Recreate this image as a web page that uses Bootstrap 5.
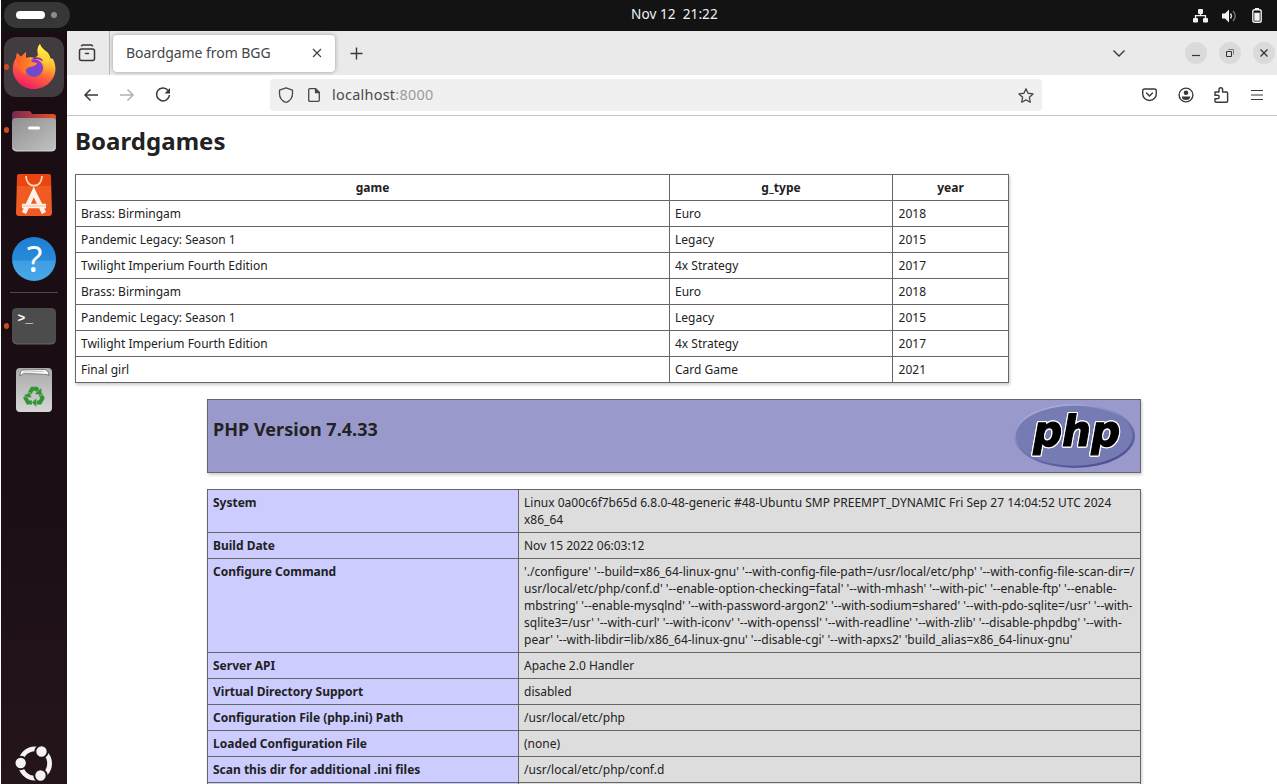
<!DOCTYPE html>
<html lang="en">
<head>
<meta charset="utf-8">
<meta name="viewport" content="width=device-width, initial-scale=1">
<title>Boardgame from BGG</title>
<link href="https://cdn.jsdelivr.net/npm/bootstrap@5.3.0/dist/css/bootstrap.min.css" rel="stylesheet">
<style>
html,body{height:100%}
body{font-family:"Noto Sans",sans-serif;color:#222;background:#fff;overflow:hidden;padding-left:1px}
svg{display:block;flex:none;overflow:visible}
.topbar{height:31px;background:#131313;color:#f2f2f2;font-size:13.6px;display:grid;grid-template-columns:630px auto 1fr;padding:0 15px 0 0;flex:none}
.topbar time{white-space:pre;line-height:28px;letter-spacing:.05px}
.activities{width:66px;height:26px;border-radius:13px;background:#373737;margin:2px 0 0 3px;padding-left:12px;gap:6px}
.activities i{width:29px;height:8px;border-radius:4px;background:#fff}
.activities b{width:6px;height:6px;border-radius:50%;background:#8c8c8c}
.dock{width:66px;background:linear-gradient(#190c13,#1b0e15 60%,#24151b);flex:none;padding-top:6px}
.dock-item{width:60px;height:60px;margin-left:3px;margin-bottom:4px;border-radius:12px;position:relative}
.dock-item.current{background:#423b40}
.dock-item.running::before{content:"";position:absolute;left:0;top:27px;width:5px;height:6px;border-radius:50%;background:#d14b20}
.dock-line{width:48px;height:1px;background:#51474c;margin:-1px 0 3px 9px}
.tabstrip{height:44px;background:#eaeaea;flex:none}
.tabview{width:43px;border-right:1px solid #b8b8b8;padding-left:11px}
.page-tab{width:222px;height:37px;margin-left:3px;background:#fff;border-radius:4px;box-shadow:0 0 4px #999;padding:0 13px 2px 13px;font-size:14px;color:#45454a}
.page-tab span{letter-spacing:-.06px}
.round-btn{width:22px;height:22px;border-radius:50%;background:#dadada}
.toolbar{height:41px;border-bottom:1px solid #c9c9cb;flex:none;padding:0 14px 0 16px}
.addressbar{width:772px;height:32px;background:#f0f0f0;border-radius:4px;margin-left:99px;padding:0 8px 0 8px;font-size:14.4px;color:#4a4a4e}
.addressbar span{letter-spacing:.28px}
.addressbar em{font-style:normal;color:#9b9b9f}
.document{padding:0 8px;min-height:0}
.document h1{font-size:24px;font-weight:700;line-height:33px;margin:8px 0 17px;letter-spacing:.05px}
.document table{width:933px;table-layout:fixed;border-collapse:collapse;box-shadow:1px 2px 3px #ccc;font-size:12px;line-height:17px}
.document td,.document th{border:1px solid #666;padding:4px 5px;vertical-align:baseline;font-weight:400;overflow-wrap:anywhere}
.games th{font-weight:700;text-align:center}
.games td:last-child{padding-left:5.6px}
.phpinfo{width:934px;margin-left:132px}
.php-head{height:74px;background:#99c;border:1px solid #666;box-shadow:1px 2px 3px #ccc;margin:16px 0;padding:0 5px}
.php-head h2{font-size:18px;line-height:25px;font-weight:700;margin:17px 0 0;letter-spacing:.03px}
.php-word{filter:drop-shadow(1px 0 0 #fff) drop-shadow(-1px 0 0 #fff) drop-shadow(0 1px 0 #fff) drop-shadow(0 -1px 0 #fff)}
.phpinfo th{background:#ccf;font-weight:700}
.phpinfo td{background:#ddd;white-space:nowrap}
</style>
<script src="https://cdn.jsdelivr.net/npm/bootstrap@5.3.0/dist/js/bootstrap.bundle.min.js"></script>
</head>
<body class="d-flex flex-column">
<header class="topbar">
  <div class="activities d-flex align-items-center"><i></i><b></b></div>
  <time>Nov 12  21:22</time>
  <div class="d-flex justify-content-end align-items-center gap-3">
    <svg width="15" height="14" viewBox="0 0 15 14" fill="#f2f2f2"><rect x="5" y="0" width="5" height="5" rx="1"/><rect x="0" y="9" width="5" height="4.5" rx="1"/><rect x="10" y="9" width="5" height="4.5" rx="1"/><path d="M7.5 4v3M2.5 10V6.7h10V10" fill="none" stroke="#f2f2f2" stroke-width="1.3"/></svg>
    <svg width="14" height="14" viewBox="0 0 14 14" style="margin-left:-2px"><path d="M0 4.500h3L7 .5v13L3 9.500H0z" fill="#f2f2f2"/><path d="M8.500 4.500q2 2.500 0 5" fill="none" stroke="#ddd" stroke-width="1.300"/><path d="M11 2q4.500 5 0 10" fill="none" stroke="#777" stroke-width="1.300"/></svg>
    <svg width="10" height="15" viewBox="0 0 10 15"><rect x=".8" y="1.700" width="8.400" height="12.500" rx="1.800" fill="none" stroke="#f2f2f2" stroke-width="1.400"/><path d="M3 0h4v2H3zM2.300 4.800h5.400v8H2.300z" fill="#f2f2f2"/></svg>
  </div>
</header>
<div class="d-flex flex-grow-1" style="min-height:0">
  <nav class="dock d-flex flex-column">
    <div class="dock-item current running" style="margin-bottom:3px">
      <svg width="60" height="60" viewBox="0 0 60 60"><defs><linearGradient id="fx" x1=".8" y1="0" x2=".35" y2="1"><stop offset="0" stop-color="#fff04a"/><stop offset=".35" stop-color="#ffc035"/><stop offset=".6" stop-color="#ff6a35"/><stop offset="1" stop-color="#f01b6b"/></linearGradient><radialGradient id="globe" cx=".6" cy=".1" r=".8"><stop offset="0" stop-color="#a32fd0"/><stop offset="1" stop-color="#6650cf"/></radialGradient><linearGradient id="flame" x2="1"><stop stop-color="#ff5a2b"/><stop offset="1" stop-color="#ff9a25"/></linearGradient><linearGradient id="tail" x1=".3" y1="0" x2=".4" y2="1"><stop stop-color="#fff04a"/><stop offset=".5" stop-color="#ffd334"/><stop offset="1" stop-color="#ff7a35" stop-opacity="0"/></linearGradient></defs>
      <path d="M36 7c1 4 5 6 8 9l2 5 3 1c4 8 3 16-2 22-8 10-25 11-33 1C8 39 7 29 12 21l1-5 4 4 5-5v6c3-1 6-1 9 0l3-3c-1-4-1-8 2-11z" fill="url(#fx)"/>
      <circle cx="30" cy="31" r="9" fill="url(#globe)"/>
      <path d="M12 22l1-6 4 4 5-5v6c3 0 5 1 6 4l5 1c-1 3-4 3-7 4-4 1-5 4-4 7-5-1-9-7-10-15z" fill="url(#flame)"/>
      <path d="M38 21c-1-4-5-5-4-9 0-2 1-4 2-5 1 4 5 6 8 9 5 7 4 17-1 23-2 2-4 3-6 3 4-6 5-14 1-21z" fill="url(#tail)"/>
      <path d="M28 22c3-3 8-2 11 1l-1 1c-3-2-5-2-10-2z" fill="#8b2cae"/></svg>
    </div>
    <div class="dock-item running" style="margin-bottom:5px">
      <svg width="60" height="60" viewBox="0 0 60 60"><defs><linearGradient id="fold" x2="1"><stop stop-color="#7a2855"/><stop offset="1" stop-color="#e35426"/></linearGradient><linearGradient id="cab" x2="1" y2="1"><stop stop-color="#8f8f8f"/><stop offset="1" stop-color="#c2c2c2"/></linearGradient></defs><path d="M8 23v-8q0-4 4-4h13q2 0 3 3h21q3 0 3 3v10H8z" fill="url(#fold)"/><rect x="8" y="18" width="44" height="33" rx="4" fill="url(#cab)"/><path d="M9 48q1 3 3 3h36q3 0 3-3" fill="none" stroke="#d5d5d5"/><rect x="24" y="26.500" width="12" height="3" rx="1.500" fill="#fff"/></svg>
    </div>
    <div class="dock-item">
      <svg width="60" height="60" viewBox="0 0 60 60"><path d="M16 9h28q3 0 3 3l1 36q0 3-3 3H15q-3 0-3-3l1-36q0-3 3-3z" fill="#f05b23"/><path d="M16 9h28q3 0 3 3v9H13v-9q0-3 3-3z" fill="#e84511"/><path d="M22 11c0 13 16 13 16 0" fill="none" stroke="#ffd8bd" stroke-width="1.800"/><path d="M20 48L29.800 27 40 48M18 41h24" fill="none" stroke="#fff3e8" stroke-width="4.600"/><path d="M17.500 41h25" stroke="#f9a98a" stroke-width=".8"/></svg>
    </div>
    <div class="dock-item">
      <svg width="60" height="60" viewBox="0 0 60 60"><defs><linearGradient id="help" x2="0" y2="1"><stop stop-color="#1c7fd4"/><stop offset=".53" stop-color="#278ada"/><stop offset=".54" stop-color="#3f9de2"/><stop offset="1" stop-color="#49a8e7"/></linearGradient></defs><circle cx="30" cy="30" r="22" fill="url(#help)"/><text x="30.500" y="43" text-anchor="middle" font-family="Noto Sans" font-size="36" fill="#fff">?</text></svg>
    </div>
    <div class="dock-line"></div>
    <div class="dock-item running">
      <svg width="60" height="60" viewBox="0 0 60 60"><rect x="8" y="12" width="44" height="36" rx="4.500" fill="#4c4c4c"/><path d="M9 45q1 3 4 3h34q4 0 4-3" fill="none" stroke="#666"/><text x="13.500" y="25.500" font-family="Liberation Mono" font-weight="700" font-size="13" fill="#fff">&gt;_</text></svg>
    </div>
    <div class="dock-item">
      <svg width="60" height="60" viewBox="0 0 60 60"><defs><linearGradient id="bin" x2="0" y2="1"><stop stop-color="#aaa"/><stop offset="1" stop-color="#d6d6d6"/></linearGradient></defs><rect x="12" y="8" width="36" height="44" rx="4" fill="url(#bin)"/><path d="M16 16q0-6 3-6l22-.5q4 1 4 6-1 0-2-1l-21-1q-4 0-6 2.500z" fill="#fff" stroke="#666" stroke-width=".8"/><path d="M19 12l21-.5M21 13.500l20 1" fill="none" stroke="#999" stroke-width=".6"/><g fill="none" stroke="#319331" stroke-width="4"><path d="M25.500 33.500l2.700-4.700h4.300l2.500 4"/><path d="M36 33.500l2.500 4.500-2.500 4.500H32"/><path d="M28 42.500h-4L21.500 38l2-3.500"/></g><g fill="#319331" stroke="#cacaca" stroke-width=".5"><path d="M30.500 34l7.500 1.500-.5-8z"/><path d="M32.500 38v9l-4.800-4.500z"/><path d="M19 36.500l7-4.500 1.500 6z"/></g></svg>
    </div>
    <div class="mt-auto" style="height:41px;margin-left:14px">
      <svg width="38" height="38" viewBox="0 0 38 38"><circle cx="20" cy="20.500" r="14.600" fill="none" stroke="#f5f2f3" stroke-width="4.800"/><g fill="#f5f2f3" stroke="#24151b" stroke-width="2"><circle cx="5.700" cy="20" r="6.200"/><circle cx="26.500" cy="8.500" r="6.200"/><circle cx="25.500" cy="32.500" r="6.200"/></g></svg>
    </div>
  </nav>
  <main class="d-flex flex-column flex-grow-1" style="min-width:0">
    <div class="tabstrip d-flex align-items-center">
      <div class="tabview h-100 d-flex align-items-center"><svg width="18" height="18" viewBox="0 0 18 18" fill="none" stroke="#38383d" stroke-width="1.500" stroke-linecap="round"><path d="M3.500 1.800q.5-.8 1.500-.8h8q1 0 1.500.8"/><rect x="1.500" y="5" width="15" height="11.500" rx="2"/><path d="M7.500 9.500h3"/></svg></div>
      <div class="page-tab d-flex align-items-center justify-content-between"><span>Boardgame from BGG</span><svg width="10" height="10" viewBox="0 0 10 10" stroke="#444" stroke-width="1.200" style="margin-top:1px"><path d="M1 1l8 8M9 1L1 9"/></svg></div>
      <svg width="13" height="13" viewBox="0 0 13 13" stroke="#38383d" stroke-width="1.400" style="margin-left:15px"><path d="M6.500.5v12M.5 6.500h12"/></svg>
      <div class="d-flex align-items-center ms-auto"><svg width="12" height="7" viewBox="0 0 12 7" fill="none" stroke="#38383d" stroke-width="1.400" style="margin-right:60px"><path d="M.5.5L6 6 11.500.5"/></svg>
        <div class="d-flex" style="gap:12px;margin-right:2px">
          <div class="round-btn d-flex align-items-center justify-content-center"><svg width="8" height="8" viewBox="0 0 8 8"><path d="M0 6.500h8" stroke="#333" stroke-width="1.200"/></svg></div>
          <div class="round-btn d-flex align-items-center justify-content-center"><svg width="8" height="8" viewBox="0 0 8 8" fill="none" stroke="#333"><path d="M.5 2.500h5v5h-5z"/><path d="M2.500.5h5v5" stroke="#777"/></svg></div>
          <div class="round-btn d-flex align-items-center justify-content-center"><svg width="8" height="8" viewBox="0 0 8 8" stroke="#333" stroke-width="1.300"><path d="M.5.5l7 7M7.500.5l-7 7"/></svg></div>
        </div>
      </div>
    </div>
    <div class="toolbar d-flex align-items-center">
      <svg width="16" height="14" viewBox="0 0 16 14" fill="none" stroke="#38383d" stroke-width="1.500"><path d="M15 7H2M7.500 1.500L2 7l5.500 5.500"/></svg>
      <svg width="16" height="14" viewBox="0 0 16 14" fill="none" stroke="#b1b1b3" stroke-width="1.500" style="margin-left:20px"><path d="M1 7h13M8.500 1.500L14 7l-5.500 5.500"/></svg>
      <svg width="16" height="16" viewBox="0 0 16 16" fill="none" stroke="#38383d" stroke-width="1.500" style="margin-left:20px"><path d="M13 3.200A6.500 6.500 0 1 0 14.500 8"/><path d="M15 1v5.500H9.500z" fill="#38383d" stroke="none"/></svg>
      <div class="addressbar d-flex align-items-center">
        <svg width="16" height="16" viewBox="0 0 16 16" fill="none" stroke="#48484c" stroke-width="1.300" stroke-linejoin="round"><path d="M8 .8l6.500 2.400v3.300C14.500 11 12 14 8 15.500 4 14 1.500 11 1.500 6.500V3.200z"/></svg>
        <svg width="12" height="14" viewBox="0 0 12 14" fill="none" stroke="#48484c" stroke-width="1.300" stroke-linejoin="round" style="margin-left:14px"><path d="M2 .7h5.500L11.300 4.500V12q0 1.300-1.300 1.300H2Q.7 13.300.7 12V2Q.7.700 2 .7z"/><path d="M7.500.7v3.800h3.800z" fill="#48484c"/></svg>
        <span style="margin-left:12px">localhost<em>:8000</em></span>
        <svg class="ms-auto" width="16" height="15" viewBox="0 0 17 16" fill="none" stroke="#48484c" stroke-width="1.400" stroke-linejoin="round"><path d="M8.500.8l2.200 4.800 5.300.7-3.900 3.600 1 5.300-4.600-2.600-4.600 2.600 1-5.300L1 6.300l5.300-.7z"/></svg>
      </div>
      <div class="d-flex align-items-center ms-auto" style="gap:21px">
        <svg width="15" height="14" viewBox="0 0 15 14" fill="none" stroke="#38383d" stroke-width="1.400" stroke-linecap="round"><path d="M2.500 1h10q1.800 0 1.800 1.800V6a6.800 6.500 0 0 1-13.600 0V2.800Q.7 1 2.500 1z"/><path d="M4.500 5l3 3 3-3"/></svg>
        <svg width="16" height="16" viewBox="0 0 16 16"><circle cx="8" cy="8" r="6.900" fill="none" stroke="#38383d" stroke-width="1.400"/><circle cx="8" cy="5.800" r="2.300" fill="#38383d"/><path d="M3.800 9.500h8.400q0 3.500-4.200 3.500T3.800 9.500z" fill="#38383d"/></svg>
        <svg width="15" height="16" viewBox="0 0 15 16" fill="none" stroke="#38383d" stroke-width="1.400" stroke-linejoin="round" style="margin:0 1px 0 -1px"><path d="M1 5h4V2.500a1.800 1.800 0 0 1 3.600 0V5h4q1 0 1 1v8.300q0 1-1 1H2q-1 0-1-1v-2.500h2.500a1.500 1.500 0 0 0 0-3.500H1z"/></svg>
        <svg width="12" height="12" viewBox="0 0 12 12" stroke="#38383d" stroke-width="1.200"><path d="M0 1.500h12M0 6h12M0 10.500h12"/></svg>
      </div>
    </div>
    <section class="document overflow-hidden flex-grow-1">
      <h1>Boardgames</h1>
      <table class="games">
        <colgroup><col style="width:594px"><col style="width:223px"><col style="width:116px"></colgroup>
        <tr><th>game</th><th>g_type</th><th>year</th></tr>
        <tr><td>Brass: Birmingam</td><td>Euro</td><td>2018</td></tr>
        <tr><td>Pandemic Legacy: Season 1</td><td>Legacy</td><td>2015</td></tr>
        <tr><td>Twilight Imperium Fourth Edition</td><td>4x Strategy</td><td>2017</td></tr>
        <tr><td>Brass: Birmingam</td><td>Euro</td><td>2018</td></tr>
        <tr><td>Pandemic Legacy: Season 1</td><td>Legacy</td><td>2015</td></tr>
        <tr><td>Twilight Imperium Fourth Edition</td><td>4x Strategy</td><td>2017</td></tr>
        <tr><td>Final girl</td><td>Card Game</td><td>2021</td></tr>
      </table>
      <div class="phpinfo">
        <div class="php-head d-flex justify-content-between">
          <h2>PHP Version 7.4.33</h2>
          <svg width="121" height="64" viewBox="0 0 121 64" style="margin-top:4px"><defs><linearGradient id="rim" x1=".2" y1="0" x2=".8" y2="1"><stop stop-color="#b3b7dc"/><stop offset=".45" stop-color="#777bb3"/><stop offset="1" stop-color="#484892"/></linearGradient></defs><ellipse cx="60.500" cy="32" rx="60.500" ry="32" fill="url(#rim)"/><ellipse cx="60.200" cy="31.800" rx="58.300" ry="30" fill="#777bb3"/><g class="php-word"><text transform="translate(17 42) skewX(-10)" textLength="87" lengthAdjust="spacingAndGlyphs" font-family="DejaVu Sans" font-weight="700" font-size="42.500" fill="#000" stroke="#000" stroke-width="1.200">php</text></g></svg>
        </div>
        <table>
          <colgroup><col style="width:311px"><col style="width:622px"></colgroup>
          <tr><th>System</th><td>Linux 0a00c6f7b65d 6.8.0-48-generic #48-Ubuntu SMP PREEMPT_DYNAMIC Fri Sep 27 14:04:52 UTC 2024<br>x86_64</td></tr>
          <tr><th>Build Date</th><td>Nov 15 2022 06:03:12</td></tr>
          <tr><th>Configure Command</th><td>'./configure' '--build=x86_64-linux-gnu' '--with-config-file-path=/usr/local/etc/php' '--with-config-file-scan-dir=/<br>usr/local/etc/php/conf.d' '--enable-option-checking=fatal' '--with-mhash' '--with-pic' '--enable-ftp' '--enable-<br>mbstring' '--enable-mysqlnd' '--with-password-argon2' '--with-sodium=shared' '--with-pdo-sqlite=/usr' '--with-<br>sqlite3=/usr' '--with-curl' '--with-iconv' '--with-openssl' '--with-readline' '--with-zlib' '--disable-phpdbg' '--with-<br>pear' '--with-libdir=lib/x86_64-linux-gnu' '--disable-cgi' '--with-apxs2' 'build_alias=x86_64-linux-gnu'</td></tr>
          <tr><th>Server API</th><td>Apache 2.0 Handler</td></tr>
          <tr><th>Virtual Directory Support</th><td>disabled</td></tr>
          <tr><th>Configuration File (php.ini) Path</th><td>/usr/local/etc/php</td></tr>
          <tr><th>Loaded Configuration File</th><td>(none)</td></tr>
          <tr><th>Scan this dir for additional .ini files</th><td>/usr/local/etc/php/conf.d</td></tr>
          <tr><th>&nbsp;</th><td>&nbsp;</td></tr>
        </table>
      </div>
    </section>
  </main>
</div>
</body>
</html>
